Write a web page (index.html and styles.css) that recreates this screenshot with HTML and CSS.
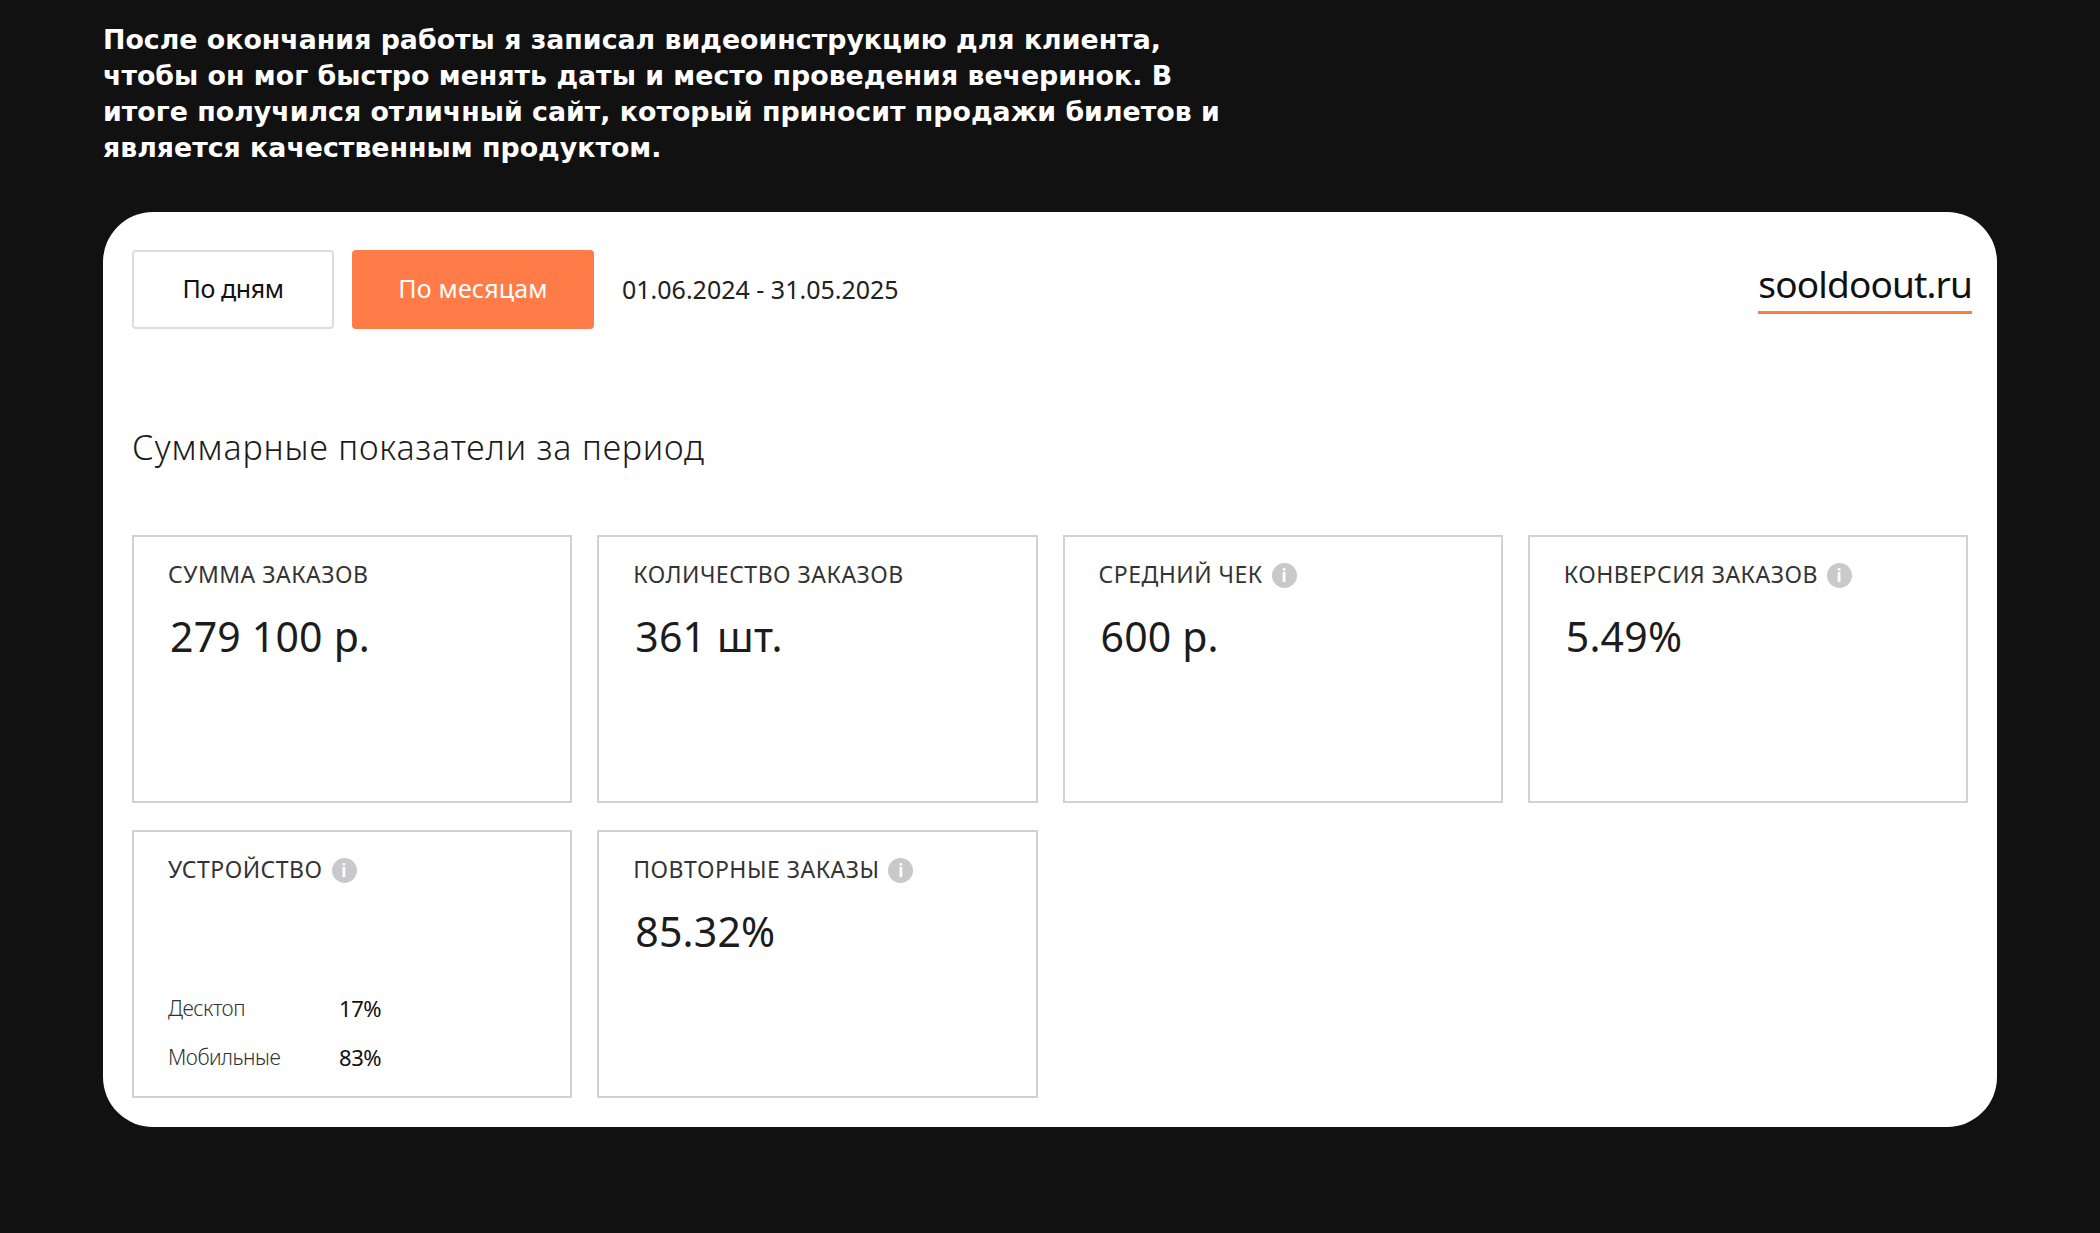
FILE: index.html
```html
<!DOCTYPE html>
<html lang="ru">
<head>
	<meta charset="utf-8">
	<title>Суммарные показатели</title>
	<link rel="stylesheet" href="styles.css">
</head>
<body>
	<p class="intro">После окончания работы я записал видеоинструкцию для клиента,<br>чтобы он мог быстро менять даты и место проведения вечеринок. В<br>итоге получился отличный сайт, который приносит продажи билетов и<br>является качественным продуктом.</p>

	<main class="panel">
		<header class="top">
			<button type="button" class="btn">По дням</button>
			<button type="button" class="btn btn-active">По месяцам</button>
			<span class="dates">01.06.2024 - 31.05.2025</span>
			<span class="logo">sooldoout.ru</span>
		</header>

		<h2 class="title">Суммарные показатели за период</h2>

		<div class="cards">
			<section class="card">
				<h3 class="card-label">СУММА ЗАКАЗОВ</h3>
				<div class="card-value">279 100 р.</div>
			</section>
			<section class="card">
				<h3 class="card-label">КОЛИЧЕСТВО ЗАКАЗОВ</h3>
				<div class="card-value">361 шт.</div>
			</section>
			<section class="card">
				<h3 class="card-label">СРЕДНИЙ ЧЕК <i class="info">i</i></h3>
				<div class="card-value">600 р.</div>
			</section>
			<section class="card">
				<h3 class="card-label">КОНВЕРСИЯ ЗАКАЗОВ <i class="info">i</i></h3>
				<div class="card-value">5.49%</div>
			</section>
			<section class="card">
				<h3 class="card-label">УСТРОЙСТВО <i class="info">i</i></h3>
				<div class="devices">
					<div class="device"><span class="device-name">Десктоп</span><span class="device-num">17%</span></div>
					<div class="device"><span class="device-name">Мобильные</span><span class="device-num">83%</span></div>
				</div>
			</section>
			<section class="card">
				<h3 class="card-label">ПОВТОРНЫЕ ЗАКАЗЫ <i class="info">i</i></h3>
				<div class="card-value">85.32%</div>
			</section>
		</div>
	</main>
</body>
</html>
```

FILE: styles.css
```css
body {
	margin: 0;
	padding: 0 103px;
	min-height: 1233px;
	box-sizing: border-box;
	background-color: #111;
	font-family: "Noto Sans", sans-serif;
	color: #1c1c1c;
}

.intro {
	margin: 0;
	padding-top: 22px;
	height: 212px;
	box-sizing: border-box;
	font-family: "DejaVu Sans", sans-serif;
	font-size: 26.8px;
	font-weight: 700;
	line-height: 36px;
	color: #fff;
	white-space: nowrap;
}

.panel {
	background-color: #fff;
	height: 915px;
	box-sizing: border-box;
	padding: 38px 25px 0 29px;
	border-radius: 50px;
}

.top {
	display: flex;
	align-items: center;
	height: 79px;
}

.btn {
	height: 79px;
	width: 202px;
	padding: 0 0 3px;
	border: 2px solid #ddd;
	border-radius: 4px;
	background-color: #fff;
	font-family: inherit;
	font-size: 25px;
	letter-spacing: -0.4px;
	color: #111;
}

.btn-active {
	width: 242px;
	margin-left: 18px;
	border-color: #ff7b47;
	background-color: #ff7b47;
	letter-spacing: 0.2px;
	color: #fff;
}

.dates {
	margin-left: 28px;
	margin-bottom: 2px;
	font-size: 25px;
	color: #222;
}

.logo {
	margin-left: auto;
	margin-bottom: 6px;
	padding-bottom: 3px;
	border-bottom: 3px solid #ff7b47;
	font-size: 37px;
	line-height: 48px;
	letter-spacing: -0.85px;
	color: #111;
}

.title {
	margin: 95px 0 0;
	font-size: 34px;
	font-weight: 300;
	line-height: 46px;
	letter-spacing: 0.85px;
	color: #1c1c1c;
}

.cards {
	display: grid;
	grid-template-columns: repeat(4, 1fr);
	grid-auto-rows: 268px;
	gap: 27px 25px;
	margin-top: 65px;
	margin-right: 4px;
}

.card {
	padding: 22px 34px 0;
	border: 2px solid #d2d2d2;
	display: flex;
	flex-direction: column;
}

.card-label {
	display: flex;
	align-items: center;
	gap: 9px;
	margin: 0;
	font-size: 23px;
	font-weight: 400;
	line-height: 30px;
	letter-spacing: 0.5px;
	color: #333;
}

.info {
	width: 25px;
	height: 25px;
	margin-top: 2px;
	border-radius: 50%;
	background-color: #c9c9c9;
	color: #fff;
	font-size: 17px;
	font-weight: 700;
	font-style: normal;
	line-height: 25px;
	text-align: center;
}

.card-value {
	margin-top: 19px;
	margin-left: 2px;
	font-size: 41px;
	line-height: 56px;
	letter-spacing: 0.2px;
	color: #1c1c1c;
}

.devices {
	margin-top: auto;
	padding-bottom: 15px;
}

.device {
	display: flex;
	align-items: center;
	height: 49px;
}

.device-name {
	width: 171px;
	font-size: 21px;
	font-weight: 300;
	letter-spacing: -0.5px;
	color: #333;
}

.device-num {
	font-size: 22px;
	letter-spacing: -0.4px;
	color: #111;
}
```
